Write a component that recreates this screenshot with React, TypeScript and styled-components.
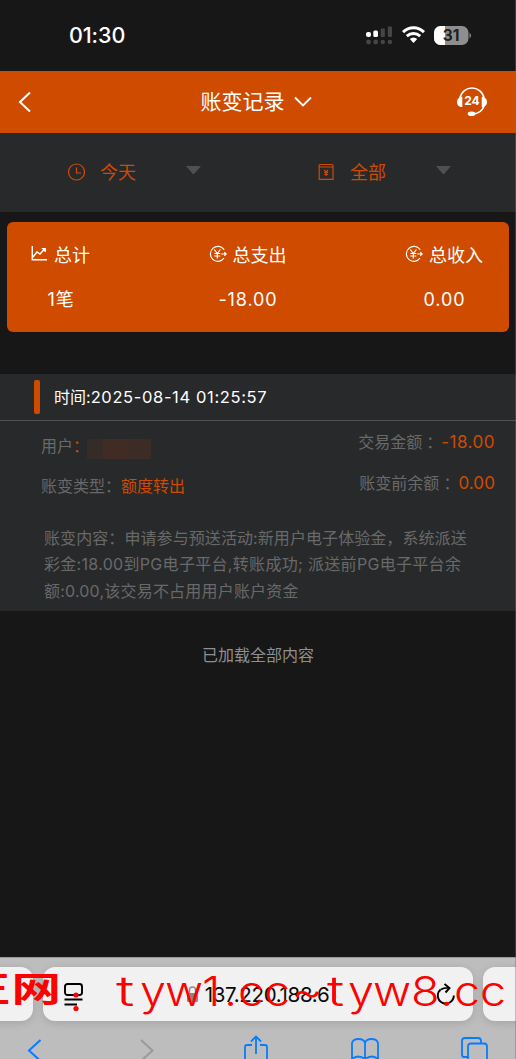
import React from "react";
import styled, { createGlobalStyle } from "styled-components";

const Global = createGlobalStyle`
  * { box-sizing: border-box; }
  body { margin: 0; background: #171717; font-family: Inter, "Noto Sans CJK SC", sans-serif; }
`;
const Screen = styled.div`
  position: relative; width: 516px; height: 1059px; overflow: hidden; display: flex; flex-direction: column;
  background: #171717; white-space: nowrap;
  &::after { content: ""; position: absolute; top: 0; right: 0; width: 1px; height: 100%; background: rgba(110, 110, 110, 0.4); }
`;
const StatusBar = styled.header`
  height: 71px; flex: none; display: flex; align-items: center; justify-content: space-between;
  padding: 0 44px 1px 69px; color: #fff;
`;
const Clock = styled.div`font-size: 21.5px; font-weight: 550; letter-spacing: -0.1px;`;
const StatusIcons = styled.div`display: flex; align-items: center; gap: 9px;`;
const NavBar = styled.nav`
  height: 62px; flex: none; background: #ce4b00; color: #fff; display: grid;
  grid-template-columns: 60px 1fr 60px; align-items: center;
`;
const BackIcon = styled.svg`margin-left: 17px;`;
const Title = styled.h1`
  margin: 0; font-size: 21px; line-height: 30px; font-weight: 400; display: flex; align-items: center;
  justify-content: center; gap: 9px; padding: 0 4px 1px 0;
  & > svg { margin-top: -1px; }
`;
const Filters = styled.div`
  height: 79px; flex: none; display: grid; grid-template-columns: 250px 1fr; background: #28292b;
`;
const Filter = styled.div`
  display: grid; grid-template-columns: 18px 71px 16px; align-items: center; column-gap: 15px;
  padding-left: 67px; color: #ce4b00; font-size: 18px; line-height: 24px;
  & > svg { margin-top: -1px; }
`;
const Caret = styled.i`
  width: 15px; height: 8px; margin-top: -5px; background: #4f5052; clip-path: polygon(0 0, 100% 0, 54% 100%, 46% 100%);
`;
const Summary = styled.section`
  height: 110px; flex: none; margin: 10px 7px 0; border-radius: 6px; background: #ce4b00; color: #fff;
  display: flex; justify-content: space-between; padding: 20px 26px 0 25px;
`;
const Stat = styled.div`
  display: flex; flex-direction: column; align-items: center; gap: 17px; font-size: 18px; line-height: 27px;
`;
const StatLabel = styled.div`display: flex; align-items: center; gap: 6px; & > svg { margin-top: -3px; margin-left: -1px; }`;
const StatValue = styled.div`letter-spacing: 0.9px;`;
const Record = styled.article`
  height: 237px; flex: none; margin-top: 42px; background: #28292b; font-size: 16px; color: #69696a;
`;
const RecordHead = styled.div`
  height: 47px; display: flex; align-items: center; gap: 14px; padding-left: 34px; color: #fff;
  border-bottom: 1px solid #505152;
`;
const Time = styled.span`font-weight: 430; margin-top: -2px;`;
const Digits = styled.span`font-size: 16.5px; letter-spacing: 0.64px;`;
const Marker = styled.i`width: 6px; height: 34px; border-radius: 2px; background: #ce4b00;`;
const Details = styled.div`display: flex; justify-content: space-between; padding: 0 21px 0 41px; height: 93px;`;
const Column = styled.div<{ $end?: boolean }>`
  display: flex; flex-direction: column; line-height: 24px;
  padding-top: ${p => (p.$end ? 9 : 13)}px;
  gap: ${p => (p.$end ? 17 : 16)}px;
  align-items: ${p => (p.$end ? "flex-end" : "flex-start")};
`;
const Field = styled.div`display: flex; align-items: center; height: 24px;`;
const MidColon = styled.span`font-family: "Noto Sans CJK TC", sans-serif;`;
const Accent = styled.span`color: #ce4b00;`;
const Amount = styled.span<{ $track: number }>`
  color: #ce4b00; margin-left: 3px; letter-spacing: ${p => p.$track}px; font-size: 17px;
`;
const Redacted = styled.span`
  width: 64px; height: 20px; margin: 5px 0 0 -2px;
  background: linear-gradient(90deg, #352b27 0 16px, #402c25 16px 40px, #3d2b25 40px);
`;
const Note = styled.p`margin: 0; padding: 11px 0 0 44px; font-size: 16px; line-height: 26.4px;`;
const Line = styled.span<{ $track: number }>`display: block; letter-spacing: ${p => p.$track}px;`;
const EndText = styled.div`margin-top: 32px; text-align: center; font-size: 16px; line-height: 24px; color: #8f8f8f;`;
const Browser = styled.footer`
  position: relative; height: 102px; flex: none; margin-top: auto; overflow: hidden;
  border-top: 1px solid #999; background: #bdbdbd;
`;
const Tabs = styled.div`display: flex; gap: 10px; margin: 9px -30px 0 -30px;`;
const Tab = styled.div<{ $main?: boolean }>`
  height: 54px; flex: ${p => (p.$main ? "0 0 430px" : "0 0 63px")}; border-radius: 12px; background: #f1f1f1;
  box-shadow: 0 2px 9px #0002; display: flex; align-items: center; justify-content: space-between; padding: 0 16px 0 21px;
`;
const Address = styled.div`
  display: flex; align-items: center; gap: 7px; color: #0a0a0a; font-size: 20.5px; letter-spacing: -0.33px;
  margin-right: 5px;
`;
const Tools = styled.div`
  height: 38px; display: grid; grid-template-columns: 112px 104px 107px 110px 1fr; align-items: start;
  padding: 14px 0 0 27px; overflow: hidden;
`;
const Chevron = styled.svg`margin-top: 4px;`;
const Watermark = styled.svg`position: absolute; left: 0; top: 0; pointer-events: none;`;

const YenArrow = () => (
  <svg width="18" height="18" viewBox="0 0 18 18" fill="none" stroke="#fff" strokeWidth="1.2">
    <path d="M15.2 4.8A7.5 7.5 0 1 0 15 13.2M5.2 4.5 8.3 8.5 11.4 4.5M8.3 8.5V13.5M5.3 8.5H11.3M5.3 11H11.3M12.3 9H17M15.3 7.2 17.2 9 15.3 10.8" />
  </svg>
);

const marks = [
  { text: "t", x: [116], stretch: 1.5 },
  { text: "yw1.cc", x: [140, 165, 202, 224, 238, 264], stretch: 1.14 },
  { text: "~", x: [292], stretch: 1.14 },
  { text: "t", x: [327], stretch: 1.4 },
  { text: "yw8.cc", x: [348, 373, 411, 440, 454, 480], stretch: 1.14 },
];

export default function App() {
  return (
    <Screen>
      <Global />
      <StatusBar>
        <Clock>01:30</Clock>
        <StatusIcons>
          <svg width="27" height="19" viewBox="0 0 27 19">
            <g fill="#fff"><rect x="0" y="6" width="5" height="5" rx="2" /><rect x="7.3" y="4.5" width="4.7" height="6.5" rx="1.5" /></g>
            <g fill="#454545">
              <rect x="14.7" y="2.5" width="4.2" height="8.5" rx="1" /><rect x="21.8" y="0.5" width="4.2" height="10.5" rx="1" />
              <circle cx="2.5" cy="16" r="2.4" /><circle cx="9.7" cy="16" r="2.4" /><circle cx="16.8" cy="16" r="2.2" /><circle cx="23.9" cy="16" r="2.2" />
            </g>
          </svg>
          <svg width="23" height="18" viewBox="0 0 23 18" fill="none" stroke="#fff" strokeWidth="3">
            <path d="M1 6.1C7 .2 16 .2 22 6.1M4.8 10.2C8.7 6.6 14.3 6.6 18.2 10.2" />
            <path d="M7.8 13.1Q11.5 9.9 15.2 13.1L11.5 17Z" fill="#fff" stroke="none" />
          </svg>
          <svg width="38" height="19" viewBox="0 0 38 19">
            <rect width="34.5" height="19" rx="6.5" fill="#8e8e8e" />
            <path d="M6.5 0H11V19H6.5A6.5 6.5 0 0 1 0 12.5V6.5A6.5 6.5 0 0 1 6.5 0Z" fill="#fff" />
            <path d="M35.5 6.5Q38.5 9.5 35.5 12.5Z" fill="#8e8e8e" />
            <text x="17" y="15" fontSize="15.5" fontWeight="700" textAnchor="middle" fill="#202020">31</text>
          </svg>
        </StatusIcons>
      </StatusBar>
      <NavBar>
        <BackIcon width="16" height="22" fill="none" stroke="#fff" strokeWidth="2"><path d="M13 1.5 3 11 13 20.5" /></BackIcon>
        <Title>账变记录
          <svg width="18" height="11" fill="none" stroke="#fff" strokeWidth="1.8"><path d="M1 1.5 9 9.5 17 1.5" /></svg>
        </Title>
        <svg width="32" height="30" viewBox="0 0 32 30" fill="none">
          <path d="M4 11C6.5-2.3 25.5-2.3 28 11M28 19C26.5 24 21.5 27 16.5 27" stroke="#fff" strokeWidth="1.6" />
          <path d="M6.3 10V20C3 20 1 18 1 15S3 10 6.3 10ZM25.7 10V20C29 20 31 18 31 15S29 10 25.7 10Z" fill="#fff" />
          <ellipse cx="15.5" cy="26.7" rx="3.8" ry="2.3" fill="#fff" />
          <text x="16" y="18.2" fontSize="12" fontWeight="700" textAnchor="middle" fill="#fff">24</text>
        </svg>
      </NavBar>
      <Filters>
        <Filter>
          <svg width="18" height="18" fill="none" stroke="#ce4b00" strokeWidth="1.2"><circle cx="9.5" cy="9" r="8" /><path d="M9.5 4.5V10H14" /></svg>
          <span>今天</span><Caret />
        </Filter>
        <Filter>
          <svg width="18" height="18" fill="none" stroke="#ce4b00" strokeWidth="1.2">
            <path d="M2.2 4V2.5Q2.2 1.5 3.6 1.5H14.6Q16 1.5 16 2.5V4M2.2 4H16V16.4H2.2ZM7.2 7 9.1 9.3 11 7M9.1 9.3V13M7.3 9.5H10.9M7.3 11.3H10.9" />
          </svg>
          <span>全部</span><Caret />
        </Filter>
      </Filters>
      <Summary>
        <Stat>
          <StatLabel>
            <svg width="17" height="16" fill="none" stroke="#fff" strokeWidth="1.4"><path d="M1.3 0V13.8H16M2 11 6 6 9 8 14 2.5M10.8 2.6H14.2V6" /></svg>
            总计
          </StatLabel>
          <StatValue>1笔</StatValue>
        </Stat>
        <Stat><StatLabel><YenArrow />总支出</StatLabel><StatValue>-18.00</StatValue></Stat>
        <Stat><StatLabel><YenArrow />总收入</StatLabel><StatValue>0.00</StatValue></Stat>
      </Summary>
      <Record>
        <RecordHead><Marker /><Time>时间:<Digits>2025-08-14 01:25:57</Digits></Time></RecordHead>
        <Details>
          <Column>
            <Field>用户<Accent>：</Accent><Redacted /></Field>
            <Field>账变类型：<Accent>额度转出</Accent></Field>
          </Column>
          <Column $end>
            <Field>交易金额<MidColon lang="zh-TW">：</MidColon><Amount $track={0.5}>-18.00</Amount></Field>
            <Field>账变前余额<MidColon lang="zh-TW">：</MidColon><Amount $track={0.1}>0.00</Amount></Field>
          </Column>
        </Details>
        <Note>
          <Line $track={0.08}>账变内容：申请参与预送活动:新用户电子体验金，系统派送</Line>
          <Line $track={0.31}>彩金:18.00到PG电子平台,转账成功; 派送前PG电子平台余</Line>
          <Line $track={0.2}>额:0.00,该交易不占用用户账户资金</Line>
        </Note>
      </Record>
      <EndText>已加载全部内容</EndText>
      <Browser>
        <Tabs>
          <Tab />
          <Tab $main>
            <svg width="20" height="23" fill="none" stroke="#000" strokeWidth="1.9"><rect x="1" y="1" width="17" height="11" rx="2.5" /><path d="M.5 16.5H18.5M.5 21.5H13" /></svg>
            <Address>
              <svg width="11" height="16"><path d="M2.5 8V4A3 3 0 0 1 8.5 4V8" fill="none" stroke="#8a8a8a" strokeWidth="1.3" /><rect y="7" width="11" height="9" rx="1.5" fill="#858585" /></svg>
              137.220.188.6
            </Address>
            <svg width="20" height="23" fill="none" stroke="#000" strokeWidth="1.9"><path d="M3.6 6.5A8 8 0 1 0 16.8 12.5M4 6.5Q7 4.5 12 5M7.5 1 12.5 5 8.5 9.5" /></svg>
          </Tab>
          <Tab />
        </Tabs>
        <Tools>
          <Chevron width="16" height="24" fill="none" stroke="#087cff" strokeWidth="2"><path d="M13.5 1 2 11.5 13.5 22" /></Chevron>
          <Chevron width="16" height="24" fill="none" stroke="#999" strokeWidth="2"><path d="M2 1 13.5 11.5 2 22" /></Chevron>
          <svg width="26" height="28" fill="none" stroke="#087cff" strokeWidth="1.8"><path d="M9 10H4Q2 10 2 12V27H24V12Q24 10 22 10H17M13 19V1.5M8 6.5 13 1.5 18 6.5" /></svg>
          <svg width="30" height="28" fill="none" stroke="#087cff" strokeWidth="1.8"><path d="M15 24V8Q14 4 8.5 4T2 8V24Q8 19 15 24Q22 19 28 24V8Q27 4 21.5 4T15 8" /></svg>
          <svg width="29" height="28" fill="none" stroke="#087cff" strokeWidth="1.8"><path d="M8 22H4Q2 22 2 20V6Q2 3 5 3H18Q21 3 21 6V8.5" /><rect x="8" y="8.5" width="19" height="19" rx="3" /></svg>
        </Tools>
        <Watermark width="516" height="101" fill="#f00">
          <text x="-31 9" y="50" fontFamily="Noto Sans CJK SC" fontSize="39" fontWeight="700" transform="scale(1.27 0.89)">正网</text>
          <circle cx="76" cy="37" r="2.6" /><circle cx="76" cy="50.5" r="2.6" />
          {marks.map(({ text, x, stretch }) => (
            <text key={x[0]} x={x.map(v => v / stretch).join(" ")} y="48.5" transform={`scale(${stretch} 1)`} fontFamily="Inter" fontWeight="300" fontSize="41">{text}</text>
          ))}
        </Watermark>
      </Browser>
    </Screen>
  );
}
